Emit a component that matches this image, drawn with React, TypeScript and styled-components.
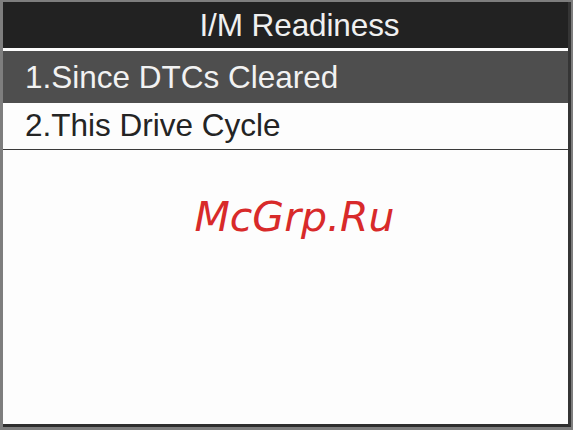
import React from 'react'
import styled, { createGlobalStyle } from 'styled-components'

const GlobalStyle = createGlobalStyle`
  html, body {
    margin: 0;
    padding: 0;
    background: #7e7e7e;
  }
  * {
    box-sizing: border-box;
  }
`

type RowProps = {
  selected?: boolean
  pad?: number
}

const menuItems = ['1.Since DTCs Cleared', '2.This Drive Cycle']

const Frame = styled.div`
  width: 573px;
  height: 430px;
  padding: 2px 2px 3px 3px;
  background: #7e7e7e;
`

const Screen = styled.div`
  display: flex;
  flex-direction: column;
  height: 100%;
  background: #fdfdfd;
  border-right: 3px solid #353535;
  border-bottom: 3px solid #2e2e2e;
  font-family: 'Liberation Sans', Arial, sans-serif;
`

const TitleBar = styled.div`
  height: 49px;
  padding: 5px 0 0 28px;
  background: #222222;
  border-bottom: 3px solid #fdfdfd;
  color: #f0f0f0;
  font-size: 31.5px;
  letter-spacing: -0.1px;
  text-align: center;
`

const MenuList = styled.div`
  display: flex;
  flex-direction: column;
`

const MenuRow = styled.div<RowProps>`
  display: flex;
  align-items: flex-start;
  padding: ${({ pad = 4 }) => pad}px 0 0 22px;
  height: ${({ selected }) => (selected ? 52 : 46.5)}px;
  background: ${({ selected }) => (selected ? '#4e4e4e' : '#fdfdfd')};
  color: ${({ selected }) => (selected ? '#f2f2f2' : '#242424')};
  border-bottom: ${({ selected }) => (selected ? 'none' : '1.5px solid #3a3a3a')};
  font-size: 31.5px;
  white-space: nowrap;
`

const Watermark = styled.div`
  margin-top: 43px;
  padding-left: 18px;
  text-align: center;
  font-family: 'DejaVu Sans', sans-serif;
  font-style: italic;
  font-size: 41px;
  color: #d82a2a;
`

export default function App() {
  return (
    <>
      <GlobalStyle />
      <Frame>
        <Screen>
          <TitleBar>I/M Readiness</TitleBar>
          <MenuList>
            {menuItems.map((item, i) => (
              <MenuRow key={item} selected={i === 0} pad={i === 0 ? 8 : 4}>
                {item}
              </MenuRow>
            ))}
          </MenuList>
          <Watermark>McGrp.Ru</Watermark>
        </Screen>
      </Frame>
    </>
  )
}
